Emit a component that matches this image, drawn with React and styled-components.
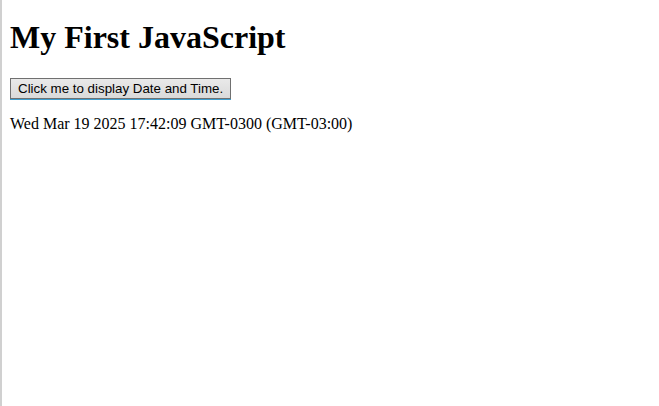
import React, { useState } from "react";
import styled, { createGlobalStyle } from "styled-components";

const GlobalStyle = createGlobalStyle`
  *, *::before, *::after { box-sizing: border-box; }
  body {
    margin: 0;
    background: #fff;
    color: #000;
    font-family: "Liberation Serif", "Times New Roman", serif;
    font-size: 16px;
  }
`;

const Page = styled.main`
  display: flex;
  flex-direction: column;
  align-items: flex-start;
  min-height: 100vh;
  padding: 18px 8px 8px;
  border-left: 2px solid #d0d0d0;
`;

const Title = styled.h1`
  margin: 0 0 22px;
  font-size: 32px;
  line-height: 38px;
  font-weight: bold;
`;

const Button = styled.button`
  height: 21px;
  padding: 0 7px;
  border: 1px solid #707070;
  border-radius: 0;
  background: linear-gradient(#e9e9e9, #dadada);
  box-shadow: 0 1px 0 #3c9fd0;
  color: #000;
  font-family: "Liberation Sans", Arial, sans-serif;
  line-height: 16px;
`;

const Output = styled.p`
  margin: 16px 0 0;
  line-height: 18px;
`;

export default function App() {
  const [text, setText] = useState("Wed Mar 19 2025 17:42:09 GMT-0300 (GMT-03:00)");
  return (
    <>
      <GlobalStyle />
      <Page>
        <Title>My First JavaScript</Title>
        <Button type="button" onClick={() => setText(String(new Date()))}>
          Click me to display Date and Time.
        </Button>
        <Output aria-live="polite">{text}</Output>
      </Page>
    </>
  );
}
